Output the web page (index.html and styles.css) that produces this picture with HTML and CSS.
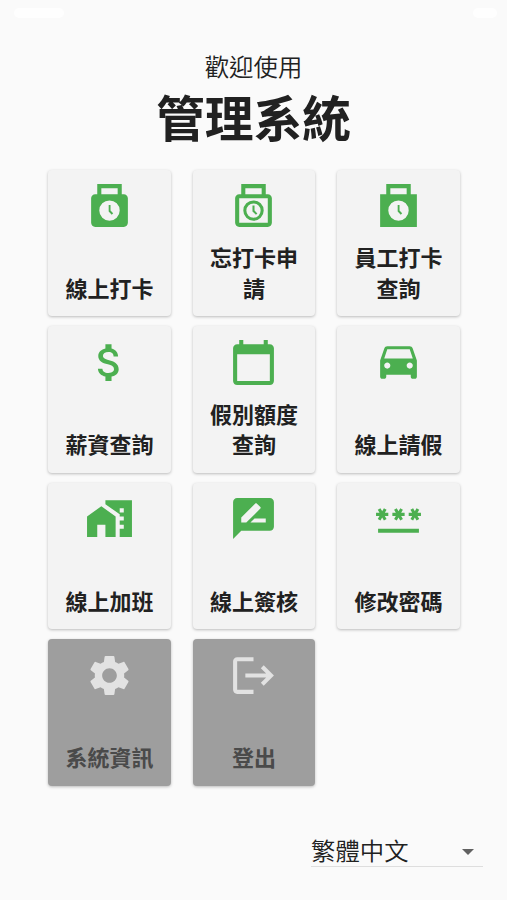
FILE: index.html
```html
<!DOCTYPE html>
<html lang="zh-Hant">
<head>
  <meta charset="UTF-8">
  <meta name="viewport" content="width=device-width, initial-scale=1">
  <title>管理系統</title>
  <link rel="stylesheet" href="styles.css">
</head>
<body>
  <div class="status-bar">
    <span class="status-time"></span>
    <span class="status-battery"></span>
  </div>

  <header>
    <p class="welcome">歡迎使用</p>
    <h1>管理系統</h1>
  </header>

  <main class="menu">
    <a class="card">
      <svg viewBox="0 0 24 24"><path fill-rule="evenodd" d="M6 1h12v5h1c1.100 0 2 .9 2 2v12c0 1.100-.9 2-2 2H5c-1.100 0-2-.9-2-2V8c0-1.100.9-2 2-2h1zm2 2v3h8V3zm4 6a5 5 0 1 0 0 10 5 5 0 0 0 0-10z"/><path d="M11.600 11.300h.9v2.700l1.300 1.300-.7.700-1.500-1.600z"/></svg>
      <span>線上打卡</span>
    </a>
    <a class="card">
      <svg viewBox="0 0 24 24"><path fill-rule="evenodd" d="M6 1h12v5h1c1.100 0 2 .9 2 2v12c0 1.100-.9 2-2 2H5c-1.100 0-2-.9-2-2V8c0-1.100.9-2 2-2h1zm2 2v3h8V3zM5 8v12h14V8zm7 1a5 5 0 1 1 0 10 5 5 0 0 1 0-10zm0 1.500a3.500 3.500 0 1 0 0 7 3.500 3.500 0 0 0 0-7z"/><path d="M11.500 11.500h1v2.500l1.400 1.400-.7.700-1.700-1.700z"/></svg>
      <span>忘打卡申請</span>
    </a>
    <a class="card">
      <svg viewBox="0 0 24 24"><path fill-rule="evenodd" d="M6 1h12v5h3v16H3V6h3zm2 2v3h8V3zm4 6a5 5 0 1 0 0 10 5 5 0 0 0 0-10z"/><path d="M11.600 11.300h.9v2.700l1.300 1.300-.7.700-1.500-1.600z"/></svg>
      <span>員工打卡查詢</span>
    </a>
    <a class="card">
      <svg viewBox="0 0 24 24"><path d="M11.800 10.900c-2.270-.59-3-1.200-3-2.150 0-1.090 1.010-1.850 2.700-1.850 1.780 0 2.440.85 2.500 2.100h2.210c-.07-1.720-1.120-3.300-3.210-3.810V3h-3v2.160c-1.940.42-3.500 1.680-3.500 3.610 0 2.310 1.910 3.460 4.700 4.130 2.500.6 3 1.480 3 2.410 0 .69-.49 1.790-2.700 1.790-2.060 0-2.870-.92-2.980-2.100h-2.200c.12 2.190 1.760 3.420 3.680 3.830V21h3v-2.150c1.950-.37 3.500-1.500 3.500-3.550 0-2.840-2.430-3.810-4.700-4.400z"/></svg>
      <span>薪資查詢</span>
    </a>
    <a class="card">
      <svg viewBox="0 0 24 24"><path d="M20 3h-1V1h-2v2H7V1H5v2H4c-1.100 0-2 .9-2 2v16c0 1.100.9 2 2 2h16c1.100 0 2-.9 2-2V5c0-1.100-.9-2-2-2zm0 18H4V8h16v13z"/></svg>
      <span>假別額度查詢</span>
    </a>
    <a class="card">
      <svg viewBox="0 0 24 24"><path d="M18.920 5.010C18.720 4.420 18.160 4 17.500 4h-11c-.66 0-1.210.42-1.420 1.010L3 11v8c0 .55.45 1 1 1h1c.55 0 1-.45 1-1v-1h12v1c0 .55.45 1 1 1h1c.55 0 1-.45 1-1v-8l-2.080-5.990zM6.500 15c-.83 0-1.500-.67-1.500-1.500S5.670 12 6.500 12s1.500.67 1.500 1.500S7.330 15 6.500 15zm11 0c-.83 0-1.500-.67-1.500-1.500s.67-1.500 1.500-1.500 1.500.67 1.500 1.500-.67 1.500-1.500 1.500zM5 10l1.500-4.500h11L19 10H5z"/></svg>
      <span>線上請假</span>
    </a>
    <a class="card">
      <svg viewBox="0 0 24 24"><path d="M1 11v10h5v-6h4v6h5V11L8 6z"/><path fill-rule="evenodd" d="M10 3v1.970l7 5V11h2v2h-2v2h2v2h-2v4h6V3zm9 6h-2V7h2z"/></svg>
      <span>線上加班</span>
    </a>
    <a class="card">
      <svg viewBox="0 0 24 24"><path d="M20 2H4c-1.100 0-2 .9-2 2v18l4-4h14c1.100 0 2-.9 2-2V4c0-1.100-.9-2-2-2zM6 14v-2.470l6.880-6.880c.2-.2.510-.2.710 0l1.770 1.770c.2.2.2.510 0 .71L8.470 14H6zm12 0h-7.500l2-2H18v2z"/></svg>
      <span>線上簽核</span>
    </a>
    <a class="card">
      <svg viewBox="0 0 24 24"><path d="M2 17h20v2H2v-2zm1.150-4.050L4 11.470l.85 1.480 1.300-.75-.85-1.480H7v-1.500H5.300l.85-1.470L4.850 7 4 8.470 3.150 7l-1.300.75.85 1.470H1v1.500h1.700l-.85 1.480 1.300.75zm6.700-.75l1.300.75.85-1.480.85 1.480 1.300-.75-.85-1.480H15v-1.500h-1.700l.85-1.470-1.300-.75L12 8.470 11.150 7l-1.300.75.85 1.470H9v1.500h1.700l-.85 1.480zM23 9.220h-1.700l.85-1.470-1.300-.75L20 8.470 19.150 7l-1.300.75.85 1.470H17v1.500h1.700l-.85 1.480 1.300.75.85-1.480.85 1.480 1.300-.75-.85-1.480H23v-1.500z"/></svg>
      <span>修改密碼</span>
    </a>
    <a class="card card-gray">
      <svg viewBox="0 0 24 24"><path d="M19.140 12.940c.04-.3.060-.61.060-.94 0-.32-.02-.64-.07-.94l2.030-1.580c.18-.14.230-.41.120-.61l-1.920-3.320c-.12-.22-.37-.29-.59-.22l-2.390.96c-.5-.38-1.030-.7-1.620-.94l-.36-2.540c-.04-.24-.24-.41-.48-.41h-3.840c-.24 0-.43.170-.47.410l-.36 2.540c-.59.240-1.130.57-1.620.94l-2.390-.96c-.22-.08-.47 0-.59.220L2.740 8.870c-.12.210-.08.470.12.610l2.030 1.580c-.05.3-.09.630-.09.940s.02.640.07.940l-2.030 1.580c-.18.140-.23.410-.12.610l1.920 3.320c.12.220.37.290.59.220l2.390-.96c.5.380 1.030.7 1.620.94l.36 2.540c.05.240.24.410.48.410h3.840c.24 0 .44-.17.470-.41l.36-2.540c.59-.24 1.130-.56 1.620-.94l2.390.96c.22.080.47 0 .59-.22l1.920-3.320c.12-.22.070-.47-.12-.61l-2.010-1.580zM12 15.600c-1.980 0-3.600-1.620-3.600-3.600s1.620-3.600 3.600-3.600 3.600 1.620 3.600 3.600-1.620 3.600-3.600 3.600z"/></svg>
      <span>系統資訊</span>
    </a>
    <a class="card card-gray">
      <svg viewBox="0 0 24 24"><path d="M4 3h8v2H4v14h8v2H4c-1.100 0-2-.9-2-2V5c0-1.100.9-2 2-2z"/><path d="M17 7l-1.400 1.400L18.200 11H8v2h10.200l-2.600 2.600L17 17l5-5z"/></svg>
      <span>登出</span>
    </a>
  </main>

  <div class="language">
    <span>繁體中文</span>
    <svg viewBox="0 0 12 6"><path d="M0 0h12L6 6z"/></svg>
  </div>
</body>
</html>
```
FILE: styles.css
```css
* {
  box-sizing: border-box;
}

body {
  margin: 0;
  height: 900px;
  overflow: hidden;
  background: #fafafa;
  color: #212121;
  font-family: "Noto Sans CJK TC", sans-serif;
}

.status-bar {
  display: flex;
  justify-content: space-between;
  height: 48px;
  padding: 8px 10px 0 14px;
}

.status-time,
.status-battery {
  height: 10px;
  border-radius: 5px;
  background: #fefefe;
}

.status-time {
  width: 50px;
}

.status-battery {
  width: 24px;
}

header {
  height: 122px;
  text-align: center;
}

.welcome {
  margin: 0;
  font-size: 24.400px;
  font-weight: 350;
  line-height: 36px;
}

h1 {
  margin: 0;
  font-size: 48.800px;
  font-weight: 700;
  line-height: 64px;
}

.menu {
  display: grid;
  grid-template-columns: repeat(3, 122.400px);
  grid-auto-rows: 146.400px;
  gap: 10px 22px;
  justify-content: center;
  padding-left: 1px;
}

.card {
  display: flex;
  flex-direction: column;
  align-items: center;
  justify-content: space-between;
  padding: 11.500px 12px 14px;
  border-radius: 4px;
  background: #f3f3f3;
  box-shadow: 0 1px 3px rgba(0, 0, 0, 0.25);
  font-size: 22px;
  font-weight: 700;
  line-height: 30.500px;
  text-align: center;
}

.card svg {
  width: 49px;
  height: 49px;
  flex-shrink: 0;
  fill: #4caf50;
}

.card-gray {
  background: #9e9e9e;
  color: #4a4a4a;
}

.card-gray svg {
  fill: #e2e2e2;
}

.language {
  display: flex;
  align-items: center;
  justify-content: space-between;
  width: 172px;
  height: 32px;
  margin: 49px 24px 0 auto;
  padding-right: 9px;
  border-bottom: 1px solid #dedede;
  font-size: 24.400px;
  font-weight: 350;
  line-height: 30px;
}

.language svg {
  width: 12px;
  height: 6px;
  margin-top: 3px;
  fill: #616161;
}
```
